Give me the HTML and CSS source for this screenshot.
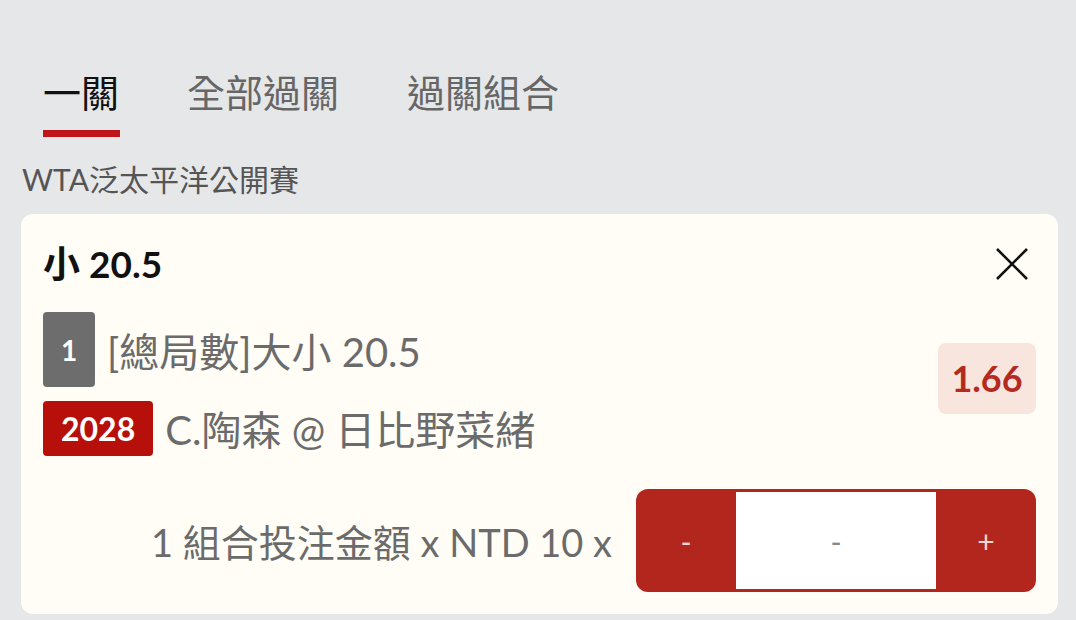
FILE: index.html
```html
<!DOCTYPE html>
<html lang="zh-Hant">
<head>
    <meta charset="UTF-8">
    <meta name="viewport" content="width=device-width, initial-scale=1.0">
    <title>投注單</title>
    <link rel="stylesheet" href="styles.css">
</head>
<body>
    <div class="tabs">
        <div class="tab active">一關</div>
        <div class="tab">全部過關</div>
        <div class="tab">過關組合</div>
    </div>

    <div class="league">WTA泛太平洋公開賽</div>

    <div class="card">
        <div class="card-head">
            <div class="pick">小 20.5</div>
            <svg class="close" width="34" height="34" viewBox="0 0 34 34">
                <path d="M2 2 L32 32 M32 2 L2 32" stroke="#111" stroke-width="2.6" fill="none"/>
            </svg>
        </div>

        <div class="bet">
            <div class="bet-info">
                <div class="line">
                    <span class="num">1</span>
                    <span class="market">[總局數]大小 20.5</span>
                </div>
                <div class="line">
                    <span class="code">2028</span>
                    <span class="match">C.陶森 @ 日比野菜緒</span>
                </div>
            </div>
            <div class="odds">1.66</div>
        </div>

        <div class="stake">
            <div class="stake-text">1 組合投注金額 x NTD 10 x</div>
            <div class="stepper">
                <button class="step">-</button>
                <div class="amount">-</div>
                <button class="step">+</button>
            </div>
        </div>
    </div>
</body>
</html>
```

FILE: styles.css
```css
body {
    margin: 0;
    background-color: #e6e7e9;
    font-family: "Lato", "Noto Sans CJK TC", sans-serif;
    color: #666;
}
.tabs {
    display: flex;
    gap: 67px;
    padding: 64px 0 0 43px;
}
.tab {
    font-size: 38px;
    line-height: 56px;
    padding: 0 1px 10px 0;
    color: #666;
    border-bottom: 7px solid transparent;
}
.tab.active {
    color: #111;
    border-bottom-color: #c0161b;
}
.league {
    font-size: 30px;
    line-height: 38px;
    margin: 23px 0 16px 22px;
    color: #555;
}
.card {
    margin: 0 18px 0 21px;
    background-color: #fffdf6;
    border-radius: 12px;
    padding: 28px 22px 22px 22px;
}
.card-head {
    display: flex;
    justify-content: space-between;
    align-items: center;
}
.pick {
    font-size: 37px;
    font-weight: bold;
    color: #111;
    line-height: 44px;
}
.close {
    margin-right: 7px;
}
.bet {
    display: flex;
    align-items: center;
    margin-top: 26px;
}
.bet-info {
    flex: 1;
    display: flex;
    flex-direction: column;
    gap: 12px;
}
.line {
    display: flex;
    align-items: center;
    gap: 12px;
}
.num {
    width: 52px;
    height: 75px;
    border-radius: 4px;
    background-color: #6d6d6d;
    color: #fff;
    font-size: 28px;
    font-weight: bold;
    display: flex;
    align-items: center;
    justify-content: center;
}
.code {
    height: 55px;
    padding: 0 18px;
    border-radius: 4px;
    background-color: #b70f0a;
    color: #fff;
    font-size: 32px;
    font-weight: bold;
    display: flex;
    align-items: center;
}
.market, .match {
    font-size: 40px;
    color: #6b6b6b;
}
.odds {
    background-color: #f8e6de;
    color: #b52a20;
    font-size: 36px;
    font-weight: bold;
    border-radius: 8px;
    width: 98px;
    height: 71px;
    display: flex;
    align-items: center;
    justify-content: center;
    margin-top: -13px;
}
.stake {
    display: flex;
    justify-content: flex-end;
    align-items: center;
    gap: 24px;
    margin-top: 32px;
}
.stake-text {
    font-size: 38px;
    color: #6b6b6b;
}
.stepper {
    display: flex;
    width: 400px;
    height: 103px;
    background-color: #b3261e;
    border-radius: 12px;
    padding: 3px 0;
    box-sizing: border-box;
}
.step {
    width: 100px;
    border: none;
    background: none;
    color: #f4d6d2;
    font-family: inherit;
    font-size: 30px;
}
.amount {
    flex: 1;
    background-color: #fff;
    color: #888;
    font-size: 30px;
    display: flex;
    align-items: center;
    justify-content: center;
}
```
